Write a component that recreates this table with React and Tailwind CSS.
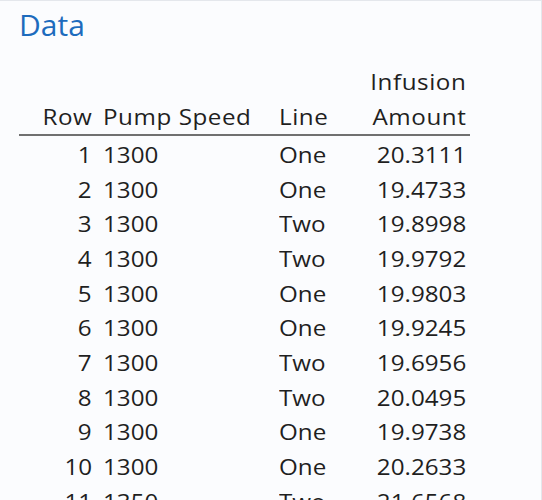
import React from "react";

const rows = [
  [1, 1300, "One", "20.3111"],
  [2, 1300, "One", "19.4733"],
  [3, 1300, "Two", "19.8998"],
  [4, 1300, "Two", "19.9792"],
  [5, 1300, "One", "19.9803"],
  [6, 1300, "One", "19.9245"],
  [7, 1300, "Two", "19.6956"],
  [8, 1300, "Two", "20.0495"],
  [9, 1300, "One", "19.9738"],
  [10, 1300, "One", "20.2633"],
  [11, 1350, "Two", "21.6568"],
];

function L({ children, h }) {
  return (
    <span className={h ? "inline-block origin-left scale-x-[1.1] tracking-[0.5px]" : "inline-block origin-left scale-x-[1.1]"}>
      {children}
    </span>
  );
}
function R({ children, h }) {
  return (
    <span className={h ? "inline-block origin-right scale-x-[1.1] tracking-[0.5px]" : "inline-block origin-right scale-x-[1.1]"}>
      {children}
    </span>
  );
}

export default function App() {
  return (
    <div
      className="w-[542px] h-[500px] overflow-hidden bg-[#fbfcfe] border-t border-r border-[#e4e7ec] text-[#1f1f1f]"
      style={{ fontFamily: '"Open Sans", "Noto Sans", sans-serif' }}
    >
      <div className="pl-[19px] pt-[6px] text-[30px] leading-[36px] text-[#1d6bbd]">Data</div>
      <div className="pl-[19px] pt-[21px]">
        <div className="w-[451px] grid grid-cols-[76px_176px_80px_119px] text-[22px] leading-[35px] items-end border-b-2 border-[#707070]">
          <div className="text-right pr-[3px]"><R h>Row</R></div>
          <div className="pl-[8px]"><L h>Pump Speed</L></div>
          <div className="pl-[8px]"><L h>Line</L></div>
          <div className="text-right pr-[4px]">
            <div><R h>Infusion</R></div>
            <div><R h>Amount</R></div>
          </div>
        </div>
        <div className="pt-[1px]">
          {rows.map((r) => (
            <div
              key={r[0]}
              className="w-[451px] grid grid-cols-[76px_176px_80px_119px] text-[22px] leading-[34.67px]"
            >
              <div className="text-right pr-[3px]"><R>{r[0]}</R></div>
              <div className="pl-[8px]"><L>{r[1]}</L></div>
              <div className="pl-[8px]"><L>{r[2]}</L></div>
              <div className="text-right pr-[4px]"><R>{r[3]}</R></div>
            </div>
          ))}
        </div>
      </div>
    </div>
  );
}
